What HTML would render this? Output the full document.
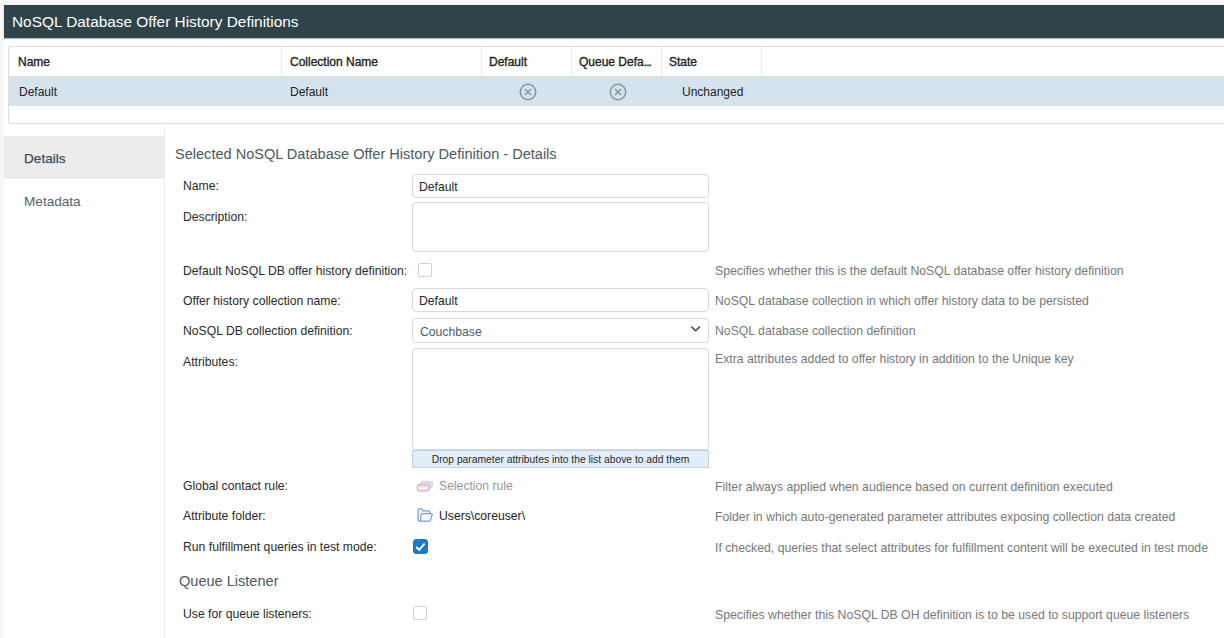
<!DOCTYPE html>
<html><head><meta charset="utf-8">
<style>
*{box-sizing:border-box;margin:0;padding:0}
html,body{width:1224px;height:638px;overflow:hidden;background:#f6f6f6;font-family:"Liberation Sans",sans-serif;}
.abs{position:absolute}
#page{position:absolute;left:4px;top:5px;width:1220px;height:633px;background:#fff}
#hdr{position:absolute;left:4px;top:5px;width:1220px;height:33px;background:#2f434a;box-shadow:0 1px 1px rgba(0,0,0,.25);color:#fff;font-size:15.4px;white-space:nowrap}
#hdr span{position:absolute;left:8px;top:8px}
#grid{position:absolute;left:8px;top:46px;width:1220px;height:78px;border:1px solid #dcdcdc;border-radius:3px;background:#fff}
.th{position:absolute;top:0;height:30px;font-size:12px;-webkit-text-stroke:0.35px #222;color:#222;white-space:nowrap}
.th span{position:absolute;top:7.5px}
.sep{position:absolute;top:0;width:1px;height:30px;background:#ececec}
#hline{position:absolute;left:0;top:29px;width:1220px;height:2px;background:#dedede}
#row{position:absolute;left:0;top:31px;width:1220px;height:28px;background:#d5e3ee}
.td{position:absolute;font-size:12px;color:#222;white-space:nowrap;top:7px}
#nav{position:absolute;left:4px;top:136px;width:160px;height:43px;background:#ececec}
.navt{position:absolute;left:24px;font-size:13.6px;color:#44555e;white-space:nowrap}
#vline{position:absolute;left:164px;top:127px;width:1px;height:511px;background:#ececec}
.h2{position:absolute;font-size:14.55px;color:#485b64;white-space:nowrap}
.lbl{position:absolute;left:183px;font-size:12.2px;color:#2a2a2a;white-space:nowrap}
.help{position:absolute;left:715px;font-size:12.25px;color:#787878;white-space:nowrap;margin-top:1px}
.inp{position:absolute;left:412px;width:297px;border:1px solid #d8d8d8;border-radius:4px;background:#fff}
.inp span{position:absolute;left:6px;font-size:12.2px;color:#262626;white-space:nowrap}
.cb{position:absolute;width:14px;height:14px;border:1px solid #c9d3dd;border-radius:2px;background:#fff}
</style></head><body>
<div id="page"></div>
<div id="hdr"><span>NoSQL Database Offer History Definitions</span></div>
<div id="grid">
  <div class="th" style="left:0;width:273px"><span style="left:9px">Name</span></div>
  <div class="sep" style="left:272px"></div>
  <div class="th" style="left:273px;width:200px"><span style="left:8px">Collection Name</span></div>
  <div class="sep" style="left:472px"></div>
  <div class="th" style="left:473px"><span style="left:7px">Default</span></div>
  <div class="sep" style="left:562px"></div>
  <div class="th" style="left:563px"><span style="left:7px">Queue Defa<span style="position:static;letter-spacing:-0.9px">...</span></span></div>
  <div class="sep" style="left:652px"></div>
  <div class="th" style="left:653px"><span style="left:7px">State</span></div>
  <div class="sep" style="left:752px"></div>
  <div id="hline"></div>
  <div id="row">
    <div class="td" style="left:10px">Default</div>
    <div class="td" style="left:281px">Default</div>
    <svg class="abs" style="left:510px;top:4.5px" width="18" height="18" viewBox="0 0 18 18"><circle cx="9" cy="9" r="7.7" fill="none" stroke="#8a959c" stroke-width="1.5"/><path d="M6 6L12 12M12 6L6 12" stroke="#8a959c" stroke-width="1.5"/></svg>
    <svg class="abs" style="left:599.5px;top:4.5px" width="18" height="18" viewBox="0 0 18 18"><circle cx="9" cy="9" r="7.7" fill="none" stroke="#8a959c" stroke-width="1.5"/><path d="M6 6L12 12M12 6L6 12" stroke="#8a959c" stroke-width="1.5"/></svg>
    <div class="td" style="left:673px">Unchanged</div>
  </div>
</div>
<div id="vline"></div>
<div id="nav"></div>
<div class="navt" style="top:150.5px;color:#3d4e57;-webkit-text-stroke:0.25px #3d4e57">Details</div>
<div class="navt" style="top:193.5px;color:#53646d">Metadata</div>

<div class="h2" style="left:175px;top:146px">Selected NoSQL Database Offer History Definition - Details</div>

<div class="lbl" style="top:179px">Name:</div>
<div class="inp" style="top:174px;height:24px"><span style="top:5px">Default</span></div>
<div class="lbl" style="top:210px">Description:</div>
<div class="inp" style="top:202px;height:50px"></div>

<div class="lbl" style="top:264px">Default NoSQL DB offer history definition:</div>
<div class="cb" style="left:418px;top:263px"></div>
<div class="help" style="top:263px">Specifies whether this is the default NoSQL database offer history definition</div>

<div class="lbl" style="top:294px">Offer history collection name:</div>
<div class="inp" style="top:288px;height:24px"><span style="top:5px">Default</span></div>
<div class="help" style="top:293px">NoSQL database collection in which offer history data to be persisted</div>

<div class="lbl" style="top:324px">NoSQL DB collection definition:</div>
<div class="inp" style="top:318px;height:24.5px"><span style="top:5.5px;left:7px;color:#47606d">Couchbase</span>
<svg class="abs" style="left:277px;top:5px" width="12" height="10" viewBox="0 0 12 10"><path d="M1.3 2.6L5.6 6.6L9.9 2.6" fill="none" stroke="#3e5562" stroke-width="1.6"/></svg></div>
<div class="help" style="top:323px">NoSQL database collection definition</div>

<div class="lbl" style="top:354.5px">Attributes:</div>
<div class="inp" style="top:348px;height:102px"></div>
<div class="abs" style="left:412px;top:450px;width:297px;height:18px;background:#e2edfa;border:1px solid #bcd2ec;font-size:10.3px;color:#2a2a2a;text-align:center;line-height:18px;white-space:nowrap">Drop parameter attributes into the list above to add them</div>
<div class="help" style="top:351px">Extra attributes added to offer history in addition to the Unique key</div>

<div class="lbl" style="top:479px">Global contact rule:</div>
<svg class="abs" style="left:416px;top:479px" width="18" height="14" viewBox="0 0 18 14"><rect x="5.4" y="2.6" width="11" height="5.6" rx="1.3" fill="#e6e8ea" stroke="#d3d7db" stroke-width="1.1"/><rect x="3.4" y="4.2" width="11" height="5.6" rx="1.3" fill="#dce9f6" stroke="#b9d3ee" stroke-width="1.1"/><rect x="1.4" y="6.2" width="11.4" height="5.6" rx="1.3" fill="#fbe4ec" stroke="#f0a8c0" stroke-width="1.2"/><rect x="2.8" y="7.6" width="8.6" height="2.4" fill="#fff"/><path d="M3.6 8.4H10.6" stroke="#f2b3c8" stroke-width="0.8" stroke-dasharray="1 0.6"/></svg>
<div class="abs" style="left:439px;top:479px;font-size:12.2px;color:#999;white-space:nowrap">Selection rule</div>
<div class="help" style="top:479px">Filter always applied when audience based on current definition executed</div>

<div class="lbl" style="top:509px">Attribute folder:</div>
<svg class="abs" style="left:417px;top:508px" width="17" height="15" viewBox="0 0 17 15"><path d="M12.8 5.4V4Q12.8 2.8 11.6 2.8H6L5.3 1.6Q4.9 0.8 4 0.8H2.3Q1.1 0.8 1.1 2V11.8Q1.1 13 2.3 13H12.5" fill="none" stroke="#739fd6" stroke-width="1.25" stroke-linejoin="round"/><path d="M5 5.6H14.6Q15.4 5.6 15.2 6.4L13.6 12.2Q13.4 13 12.6 13M3.3 13L4.2 6.4Q4.3 5.6 5 5.6" fill="none" stroke="#739fd6" stroke-width="1.25" stroke-linejoin="round"/></svg>
<div class="abs" style="left:439px;top:509px;font-size:12.2px;color:#222;white-space:nowrap">Users\coreuser\</div>
<div class="help" style="top:509px">Folder in which auto-generated parameter attributes exposing collection data created</div>

<div class="lbl" style="top:540px">Run fulfillment queries in test mode:</div>
<div class="cb" style="left:413px;top:538.5px;width:15px;height:15px;border-radius:3px;background:#1a77d2;border-color:#1a77d2"><svg class="abs" style="left:0px;top:0px" width="12" height="12" viewBox="0 0 12 12"><path d="M2.2 7L5.2 9.8L10.6 3.6" fill="none" stroke="#fff" stroke-width="1.9"/></svg></div>
<div class="help" style="top:540px">If checked, queries that select attributes for fulfillment content will be executed in test mode</div>

<div class="h2" style="left:179px;top:573px">Queue Listener</div>

<div class="lbl" style="top:607px">Use for queue listeners:</div>
<div class="cb" style="left:413px;top:606px"></div>
<div class="help" style="top:607px">Specifies whether this NoSQL DB OH definition is to be used to support queue listeners</div>
</body></html>
